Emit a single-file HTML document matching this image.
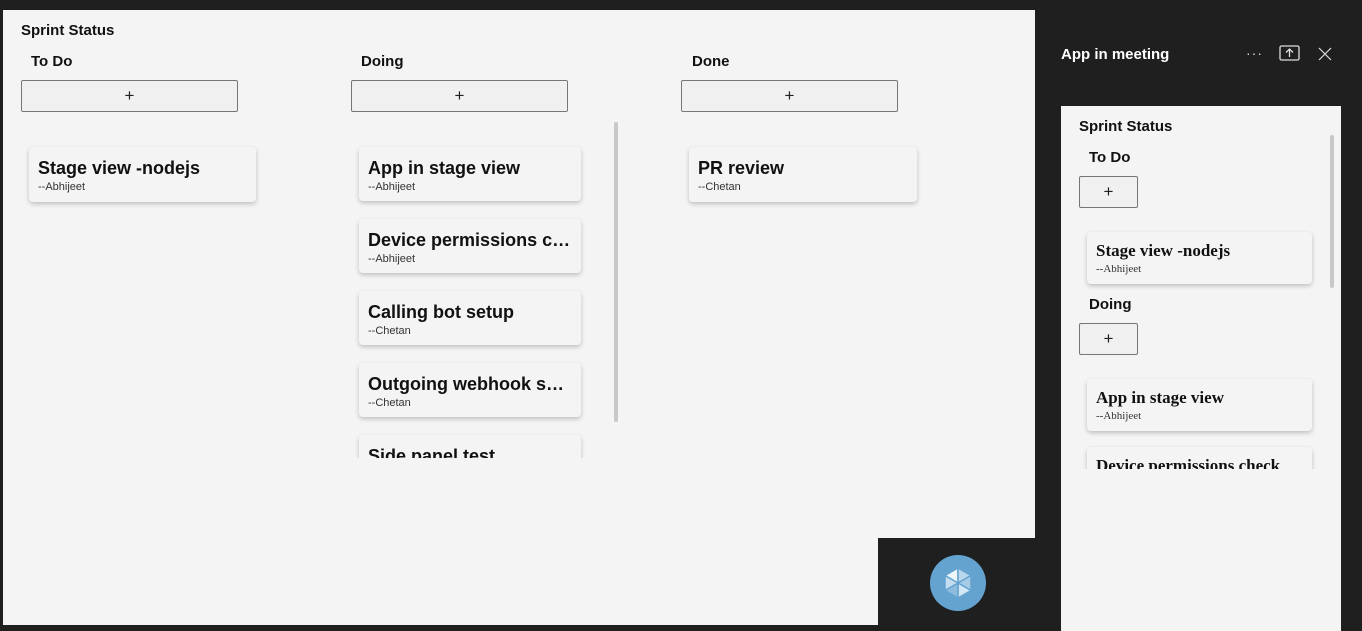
<!DOCTYPE html>
<html><head><meta charset="utf-8"><style>
*{margin:0;padding:0;box-sizing:border-box}
body{width:1362px;height:631px;background:#1f1f1f;position:relative;overflow:hidden;font-family:"Liberation Sans","DejaVu Sans",sans-serif;color:#111}
.a{position:absolute}
.main{left:3px;top:10px;width:1032px;height:615px;background:#f4f4f4}
.h{font-weight:bold;font-size:15px}
.btn{position:absolute;height:32px;background:#f0f0f0;border:1px solid #767676;border-radius:2px;text-align:center;font-size:17px;line-height:29px;color:#222}
.card{position:absolute;background:#f4f4f4;border-radius:4px;box-shadow:0 2px 5px rgba(0,0,0,.22);padding:10px 8px 0 9px;overflow:hidden}
.card b{display:block;font-size:18px;white-space:nowrap;overflow:hidden;text-overflow:ellipsis;line-height:22px}
.card i{display:block;font-style:normal;font-size:11px;color:#333;line-height:14px;margin-top:1px}
.serif{padding-top:9px}
.serif b{font-family:"Liberation Serif",serif;font-size:17px;line-height:20px}
.serif i{font-family:"Liberation Serif",serif;font-size:11px}
</style></head><body>
<div class="a main">
 <div class="a h" style="left:18px;top:12px">Sprint Status</div>
 <div class="a h" style="left:28px;top:43px">To Do</div>
 <div class="a h" style="left:358px;top:43px">Doing</div>
 <div class="a h" style="left:689px;top:43px">Done</div>
 <div class="btn" style="left:18px;top:70px;width:217px">+</div>
 <div class="btn" style="left:348px;top:70px;width:217px">+</div>
 <div class="btn" style="left:678px;top:70px;width:217px">+</div>
 <div class="card" style="left:26px;top:137px;width:227px;height:55px"><b>Stage view -nodejs</b><i>--Abhijeet</i></div>
 <div class="card" style="left:686px;top:137px;width:228px;height:55px"><b>PR review</b><i>--Chetan</i></div>
 <div class="a" style="left:350px;top:130px;width:240px;height:318px;overflow:hidden">
  <div class="card" style="left:6px;top:7px;width:222px;height:54px"><b>App in stage view</b><i>--Abhijeet</i></div>
  <div class="card" style="left:6px;top:79px;width:222px;height:54px"><b>Device permissions check</b><i>--Abhijeet</i></div>
  <div class="card" style="left:6px;top:151px;width:222px;height:54px"><b>Calling bot setup</b><i>--Chetan</i></div>
  <div class="card" style="left:6px;top:223px;width:222px;height:54px"><b>Outgoing webhook sample</b><i>--Chetan</i></div>
  <div class="card" style="left:6px;top:295px;width:222px;height:54px"><b>Side panel test</b><i>--Chetan</i></div>
 </div>
 <div class="a" style="left:611px;top:112px;width:4px;height:300px;background:#c8c8c8;border-radius:2px"></div>
</div>
<div class="a" style="left:878px;top:538px;width:157px;height:87px;background:#1f1f1f"></div>
<svg class="a" style="left:930px;top:555px" width="56" height="56" viewBox="0 0 56 56">
 <circle cx="28" cy="28" r="28" fill="#64a3d0"/>
 <g stroke="#64a3d0" stroke-width="1.5" stroke-linejoin="round">
 <polygon points="28,28 28,13 15,20.5" fill="#eef5fb"/>
 <polygon points="28,28 28,13 41,20.5" fill="#b8d6ec"/>
 <polygon points="28,28 41,20.5 41,35.5" fill="#a6cbe6"/>
 <polygon points="28,28 41,35.5 28,43" fill="#d4e7f5"/>
 <polygon points="28,28 28,43 15,35.5" fill="#8dbcde"/>
 <polygon points="28,28 15,35.5 15,20.5" fill="#c3dcef"/>
 </g>
</svg>
<div class="a" style="left:1035px;top:0;width:327px;height:631px;background:#1f1f1f"></div>
<div class="a" style="left:1061px;top:46px;color:#fff;font-weight:bold;font-size:15px">App in meeting</div>
<div class="a" style="left:1246px;top:45px;color:#ddd;font-size:14px;letter-spacing:1px">···</div>
<svg class="a" style="left:1279px;top:45px" width="22" height="18" viewBox="0 0 22 18"><rect x="1" y="1" width="19" height="14" rx="1.5" fill="none" stroke="#ddd" stroke-width="1.3"/><path d="M10.5 12V4M7 7.5l3.5-3.5 3.5 3.5" fill="none" stroke="#ddd" stroke-width="1.3"/></svg>
<svg class="a" style="left:1318px;top:47px" width="14" height="14" viewBox="0 0 14 14"><path d="M1 1l12 12M13 1L1 13" stroke="#ddd" stroke-width="1.2"/></svg>
<div class="a" style="left:1061px;top:106px;width:280px;height:525px;background:#f4f4f4;overflow:hidden">
 <div class="a h" style="left:18px;top:12px">Sprint Status</div>
 <div class="a" style="left:0;top:30px;width:280px;height:333px;overflow:hidden">
  <div class="a h" style="left:28px;top:13px">To Do</div>
  <div class="btn" style="left:18px;top:40px;width:59px">+</div>
  <div class="card serif" style="left:26px;top:96px;width:225px;height:52px"><b>Stage view -nodejs</b><i>--Abhijeet</i></div>
  <div class="a h" style="left:28px;top:160px">Doing</div>
  <div class="btn" style="left:18px;top:187px;width:59px">+</div>
  <div class="card serif" style="left:26px;top:243px;width:225px;height:52px"><b>App in stage view</b><i>--Abhijeet</i></div>
  <div class="card serif" style="left:26px;top:311px;width:225px;height:52px"><b>Device permissions check</b><i>--Abhijeet</i></div>
 </div>
 <div class="a" style="left:269px;top:29px;width:4px;height:153px;background:#c8c8c8;border-radius:2px"></div>
</div>
</body></html>
